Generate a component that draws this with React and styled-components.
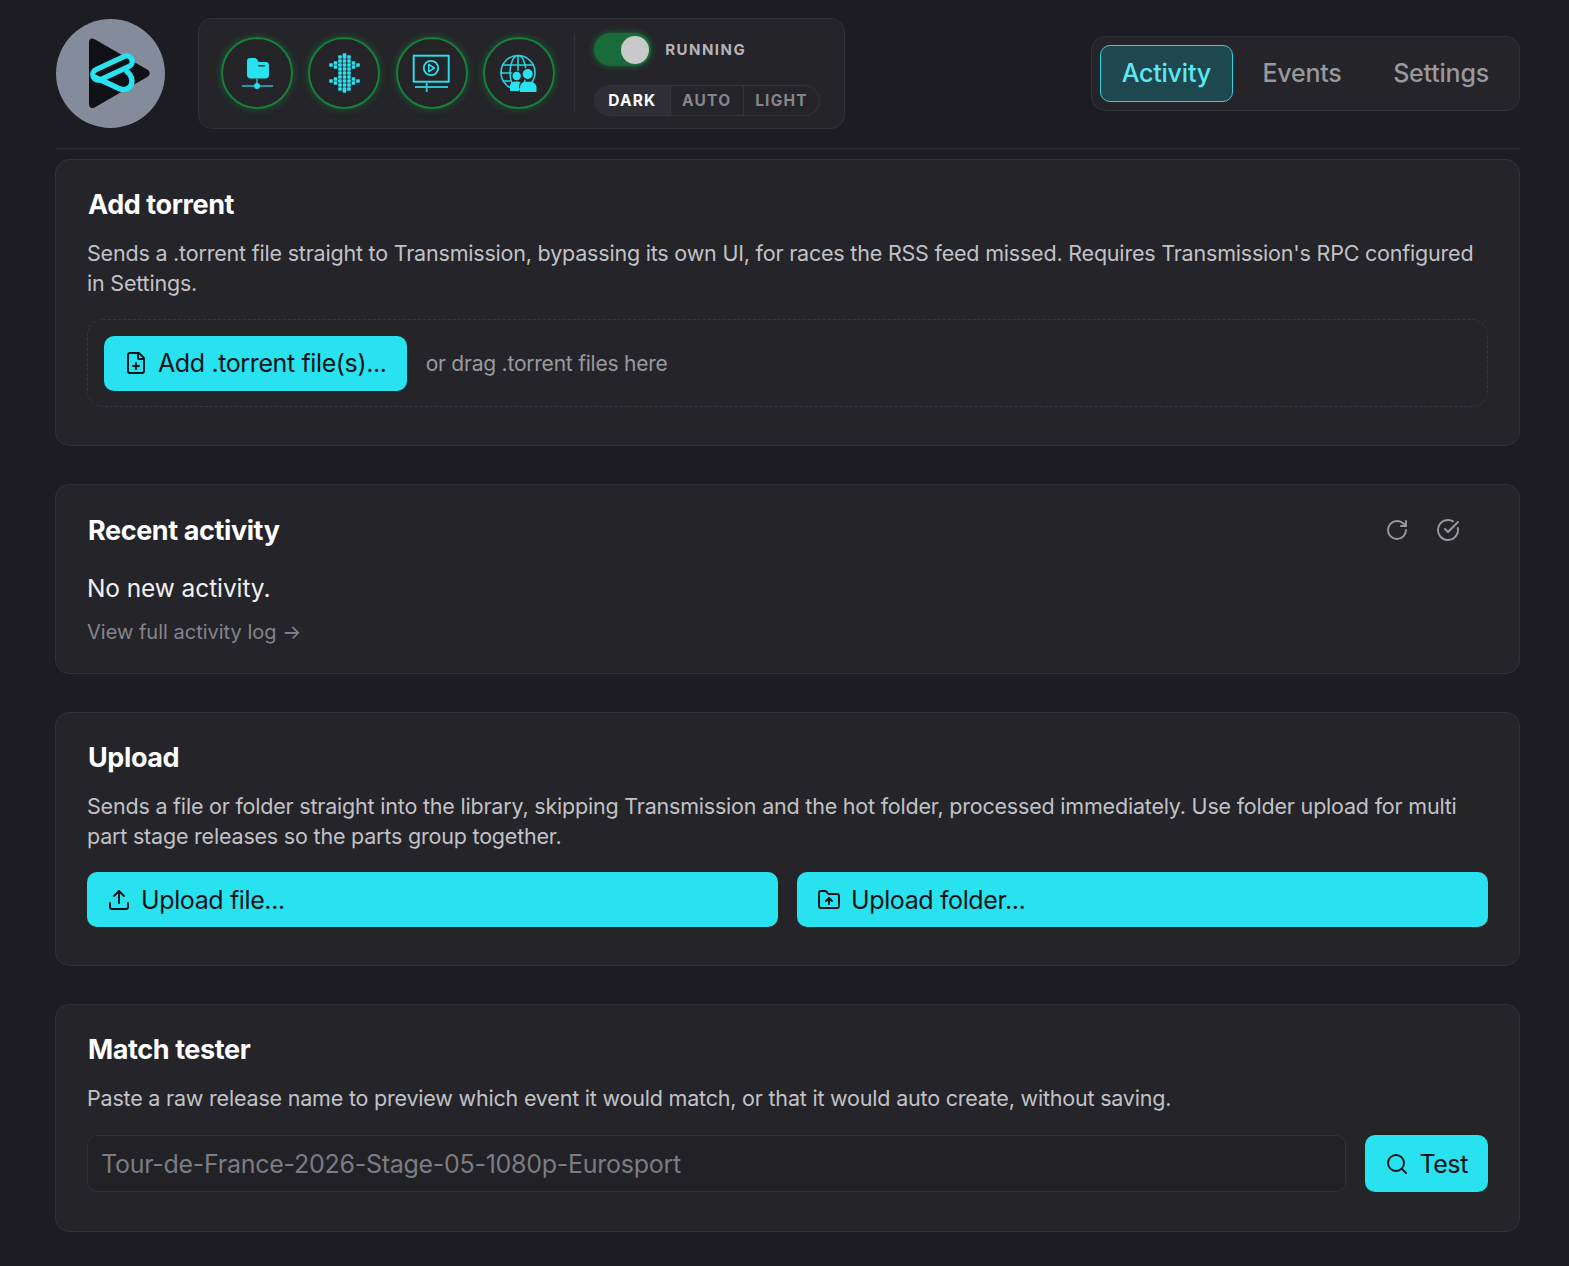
import React from 'react'
import styled, { createGlobalStyle } from 'styled-components'
import { FilePlus, RotateCw, CircleCheckBig, Upload, FolderUp, Search } from 'lucide-react'

const GlobalStyle = createGlobalStyle`
  * { box-sizing: border-box; }
  html, body { margin: 0; background: #1c1c22; }
  body { font-family: Inter, "Noto Sans", sans-serif; color: #fff; }
`

const Page = styled.div`
  padding: 18px 49px 35px 55px;
`
const Header = styled.header`
  display: flex;
  align-items: center;
  height: 131px;
  padding-bottom: 20px;
  margin-bottom: 10px;
  border-bottom: 1px solid #2c2c32;
`
const Logo = styled.svg`
  width: 109px;
  height: 109px;
  margin-left: 1px;
  margin-right: 33px;
  flex: none;
`
const Toolbar = styled.div`
  display: flex;
  align-items: center;
  height: 111px;
  padding: 0 24px 0 22px;
  background: #242429;
  border: 1px solid #313137;
  border-radius: 14px;
`
const Lights = styled.div`
  display: flex;
  gap: 15.4px;
`
const Light = styled.div`
  width: 72px;
  height: 72px;
  border-radius: 50%;
  border: 2px solid #17803c;
  box-shadow: 0 0 8px rgba(30, 170, 85, 0.38);
  flex: none;
  position: relative;
  svg {
    position: absolute;
    left: -2px;
    top: -2px;
    width: 72px;
    height: 72px;
  }
`
const VRule = styled.div`
  width: 1px;
  height: 79px;
  margin: 0 19px;
  background: #313137;
`
const Controls = styled.div`
  display: flex;
  flex-direction: column;
  gap: 19px;
  margin-top: 2px;
`
const RunRow = styled.div`
  display: flex;
  align-items: center;
  gap: 14px;
`
const Toggle = styled.div`
  width: 57px;
  height: 33px;
  padding: 3px 2px;
  display: flex;
  justify-content: flex-end;
  border-radius: 17px;
  background: #1a6b3a;
  box-shadow: 0 0 7px rgba(30, 170, 85, 0.5);
`
const Knob = styled.div`
  width: 28px;
  height: 28px;
  border-radius: 50%;
  background: #c9c9c9;
`
const RunLabel = styled.span`
  font-size: 15px;
  font-weight: 700;
  letter-spacing: 1.5px;
  color: #b4b4b9;
`
const Segments = styled.div`
  display: flex;
  height: 31px;
  width: 226px;
  border: 1px solid #34343a;
  border-radius: 16px;
  overflow: hidden;
`
const Segment = styled.div`
  display: flex;
  align-items: center;
  justify-content: center;
  width: ${p => p.$w}px;
  font-size: 15.5px;
  font-weight: 700;
  letter-spacing: 1.2px;
  color: ${p => (p.$active ? '#fff' : '#86868c')};
  background: ${p => (p.$active ? '#2e2e34' : 'transparent')};
  & + & { border-left: 1px solid #34343a; }
`
const Tabs = styled.nav`
  margin-left: auto;
  display: flex;
  gap: 7.5px;
  padding: 8px;
  height: 75px;
  background: #242429;
  border: 1px solid #313137;
  border-radius: 14px;
`
const Tab = styled.div`
  display: flex;
  align-items: center;
  height: 57px;
  padding: 0 21px;
  font-size: 25px;
  font-weight: 500;
  letter-spacing: -0.2px;
  border-radius: 10px;
  border: 1px solid ${p => (p.$active ? '#29d5e3' : 'transparent')};
  background: ${p => (p.$active ? '#1f474f' : 'transparent')};
  color: ${p => (p.$active ? '#5ceaf2' : '#98989e')};
`
const Card = styled.section`
  padding: 28px 31px ${p => p.$pb || 38}px;
  margin-bottom: 38px;
  background: #242429;
  border: 1px solid #313137;
  border-radius: 14px;
  &:last-child { margin-bottom: 0; }
`
const TitleRow = styled.div`
  display: flex;
  align-items: center;
  justify-content: space-between;
  padding-top: 1px;
`
const Title = styled.h2`
  margin: 0;
  padding-left: 1px;
  font-size: 27px;
  line-height: 34px;
  font-weight: 700;
  letter-spacing: -0.4px;
  color: #fff;
`
const Text = styled.p`
  margin: 16px 0 0;
  font-size: 21.5px;
  line-height: 30px;
  letter-spacing: -0.2px;
  color: #c2c2c6;
`
const Drop = styled.div`
  display: flex;
  align-items: center;
  gap: 19px;
  height: 88px;
  margin-top: 21px;
  padding: 0 16px;
  border: 1px dashed #35353b;
  border-radius: 16px;
`
const Hint = styled.span`
  font-size: 21px;
  letter-spacing: -0.22px;
  color: #9a9a9f;
`
const Button = styled.button`
  display: flex;
  align-items: center;
  gap: 10px;
  height: ${p => p.$h || 55}px;
  padding: 0 20px;
  border: 0;
  border-radius: 10px;
  background: #29e2ef;
  color: #111318;
  font-family: inherit;
  font-size: 25px;
  letter-spacing: -0.38px;
  font-weight: 400;
  flex: none;
`
const IconTools = styled.div`
  display: flex;
  gap: 27px;
  margin-right: 28px;
  margin-bottom: 3px;
  color: #9a9a9f;
`
const Empty = styled.div`
  margin-top: 24px;
  font-size: 24.5px;
  line-height: 32px;
  letter-spacing: -0.1px;
  color: #f1f1f3;
`
const LogLink = styled.a`
  display: block;
  margin-top: 13px;
  font-size: 20px;
  line-height: 30px;
  color: #85858b;
`
const Split = styled.div`
  display: grid;
  grid-template-columns: 1fr 1fr;
  gap: 19px;
  margin-top: 21px;
`
const InputRow = styled.div`
  display: flex;
  gap: 19px;
  margin-top: 22px;
`
const Field = styled.input`
  flex: 1;
  min-width: 0;
  height: 57px;
  padding: 0 13px;
  background: #212126;
  border: 1px solid #313137;
  border-radius: 10px;
  font-family: inherit;
  font-size: 25px;
  letter-spacing: -0.27px;
  color: #fff;
  &::placeholder { color: #7c7c82; opacity: 1; }
`

const CYAN = '#29e2ef'

const full = [-16, -12, -8, -4, 0, 4, 8, 12, 16]
const waveCols = [
  { x: 23, ys: [-8, 8] },
  { x: 27.5, ys: [-10, -6, 6, 10] },
  { x: 32, ys: full },
  { x: 36.5, ys: [-18, ...full, 18] },
  { x: 41, ys: full },
  { x: 45.5, ys: [-10, -6, 6, 10] },
  { x: 50, ys: [-8, 8] },
]

function App() {
  return (
    <Page>
      <GlobalStyle />
      <Header>
        <Logo viewBox="0 0 109 109">
          <circle cx="54.5" cy="54.5" r="54.5" fill="#848b9b" />
          <path d="M33 23.500c0-3.500 2.600-5 5.600-3.300l53 30.600c2.800 1.600 2.800 5.400 0 7L38.600 88.400c-3 1.700-5.600.2-5.600-3.300z" fill="#101116" />
          <g fill="none" stroke={CYAN} strokeWidth="5.400">
            <rect x="35.300" y="43.500" width="42.400" height="11" rx="5.500" transform="rotate(-25 56.500 49)" />
            <path d="M39.500 58.500L63 69.500C68 72 74 70 75.500 65C76.500 61 75 56 71 52.500" strokeLinecap="round" />
          </g>
        </Logo>
        <Toolbar>
          <Lights>
            <Light>
              <svg viewBox="0 0 72 72">
                <path d="M26 24c0-1.700 1.300-3 3-3h4.500c1.200 0 2 .6 2.700 1.600l1.300 2.400H45c1.700 0 3 1.300 3 3v10c0 2-1.400 3.500-3.500 3.500h-15C27.500 41.500 26 40 26 38z" fill={CYAN} />
                <rect x="37" y="28" width="7" height="1.600" rx=".8" fill="#242429" />
                <path d="M36 41v8M21 49h31" stroke="#2a95a0" strokeWidth="2" fill="none" />
                <circle cx="36" cy="49" r="3" fill={CYAN} />
              </svg>
            </Light>
            <Light>
              <svg viewBox="0 0 72 72">
                {waveCols.map(c =>
                  c.ys.map(y => (
                    <rect key={`${c.x}-${y}`} x={c.x - 1.8} y={36 + y - 1.7} width="3.600" height="3.400" rx=".8" fill={CYAN} />
                  ))
                )}
              </svg>
            </Light>
            <Light>
              <svg viewBox="0 0 72 72">
                <g fill="none" stroke={CYAN}>
                  <rect x="17.700" y="18.700" width="35" height="26" strokeWidth="1.900" />
                  <circle cx="35" cy="31" r="7.200" strokeWidth="1.800" />
                  <path d="M32.700 27.300v7.400l5.600-3.700z" strokeWidth="1.500" strokeLinejoin="round" />
                  <path d="M19 50h33M30.700 45.500v9.500" strokeWidth="1.900" stroke="#2ac3cf" />
                </g>
              </svg>
            </Light>
            <Light>
              <svg viewBox="0 0 72 72">
                <g fill="none" stroke="#29d3df" strokeWidth="1.600">
                  <circle cx="35" cy="35.500" r="17" />
                  <ellipse cx="35" cy="35.500" rx="8" ry="17" />
                  <path d="M35 18.500v17M19.500 28h31M18 36h14M19.500 44h8" />
                </g>
                <circle cx="44.700" cy="37" r="6.400" fill="#242429" />
                <circle cx="33.700" cy="39" r="5.500" fill="#242429" />
                <circle cx="44.700" cy="37" r="5" fill={CYAN} />
                <circle cx="33.700" cy="39" r="4.200" fill={CYAN} />
                <path d="M27 54v-5c0-3 2-4.500 5-4.500h2.500c1.500 0 2.500.5 3 1-1 1-1.500 2.500-1.500 4V54z" fill={CYAN} />
                <path d="M37 55v-4.500c0-3.500 2.500-5.800 5.500-5.800h4.500c3.500 0 6.500 2.300 6.500 5.800V55z" fill={CYAN} />
              </svg>
            </Light>
          </Lights>
          <VRule />
          <Controls>
            <RunRow>
              <Toggle><Knob /></Toggle>
              <RunLabel>RUNNING</RunLabel>
            </RunRow>
            <Segments>
              <Segment $w={75} $active>DARK</Segment>
              <Segment $w={74}>AUTO</Segment>
              <Segment $w={77}>LIGHT</Segment>
            </Segments>
          </Controls>
        </Toolbar>
        <Tabs>
          <Tab $active>Activity</Tab>
          <Tab>Events</Tab>
          <Tab>Settings</Tab>
        </Tabs>
      </Header>

      <Card>
        <Title>Add torrent</Title>
        <Text>Sends a .torrent file straight to Transmission, bypassing its own UI, for races the RSS feed missed. Requires Transmission's RPC configured in Settings.</Text>
        <Drop>
          <Button><FilePlus size={24} strokeWidth={1.9} />Add .torrent file(s)...</Button>
          <Hint>or drag .torrent files here</Hint>
        </Drop>
      </Card>

      <Card $pb={26}>
        <TitleRow>
          <Title>Recent activity</Title>
          <IconTools>
            <RotateCw size={24} strokeWidth={1.9} />
            <CircleCheckBig size={24} strokeWidth={1.9} />
          </IconTools>
        </TitleRow>
        <Empty>No new activity.</Empty>
        <LogLink>View full activity log →</LogLink>
      </Card>

      <Card>
        <Title>Upload</Title>
        <Text>Sends a file or folder straight into the library, skipping Transmission and the hot folder, processed immediately. Use folder upload for multi part stage releases so the parts group together.</Text>
        <Split>
          <Button><Upload size={24} strokeWidth={1.9} />Upload file...</Button>
          <Button><FolderUp size={24} strokeWidth={1.9} />Upload folder...</Button>
        </Split>
      </Card>

      <Card $pb={39}>
        <Title>Match tester</Title>
        <Text>Paste a raw release name to preview which event it would match, or that it would auto create, without saving.</Text>
        <InputRow>
          <Field placeholder="Tour-de-France-2026-Stage-05-1080p-Eurosport" />
          <Button $h={57}><Search size={24} strokeWidth={1.9} />Test</Button>
        </InputRow>
      </Card>
    </Page>
  )
}

export default App
